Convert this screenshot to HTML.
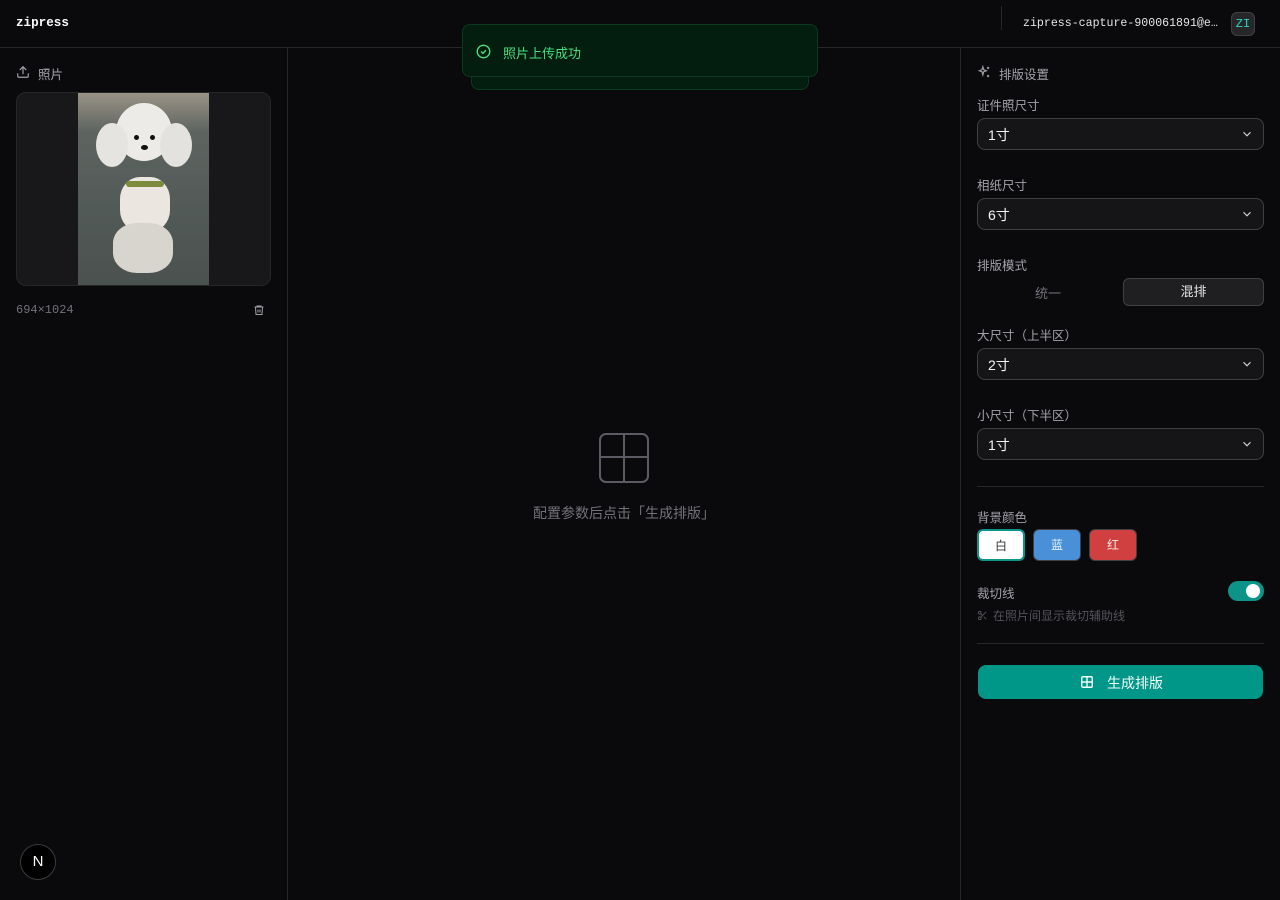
<!DOCTYPE html>
<html><head><meta charset="utf-8">
<style>
*{box-sizing:border-box;margin:0;padding:0}
body{width:1280px;height:900px;background:#0a0a0c;color:#e5e5e5;font-family:"Liberation Sans","Noto Sans CJK SC",sans-serif;position:relative;overflow:hidden;font-size:13px}
.mono{font-family:"Liberation Mono","Noto Sans CJK SC",monospace}
.hdr{position:absolute;left:0;top:0;width:1280px;height:48px;border-bottom:1px solid #27272a}
.left{position:absolute;left:0;top:48px;width:288px;height:852px;border-right:1px solid #27272a}
.right{position:absolute;left:960px;top:48px;width:320px;height:852px;border-left:1px solid #27272a}
.lbl{position:absolute;left:16px;font-size:12.5px;color:#a1a1aa}
.sel{position:absolute;left:16px;width:287px;height:32px;border:1px solid #3f3f46;border-radius:8px;background:#151517;color:#f4f4f5;font-size:14px;padding:6px 10px}
.sel svg{position:absolute;right:9px;top:8px}
.sw{position:absolute;top:481px;width:48px;height:32px;border-radius:6px;font-size:12px;text-align:center;line-height:30px}
</style></head><body>
<div class="hdr">
  <div class="mono" style="position:absolute;left:16px;top:16px;font-size:12.6px;font-weight:bold;color:#fafafa">zipress</div>
  <div style="position:absolute;left:1001px;top:6px;width:1px;height:24px;background:#27272a"></div>
  <div class="mono" style="position:absolute;left:1023px;top:17px;font-size:11.6px;color:#e4e4e7">zipress-capture-900061891@e…</div>
  <div class="mono" style="position:absolute;left:1231px;top:12px;width:24px;height:24px;border-radius:6px;background:#27272a;border:1px solid #3f3f46;color:#2dd4bf;font-size:12px;text-align:center;line-height:22px">ZI</div>
</div>
<div class="left">
  <svg style="position:absolute;left:16px;top:17px" width="14" height="14" viewBox="0 0 24 24" fill="none" stroke="#a1a1aa" stroke-width="2" stroke-linecap="round"><path d="M21 15v4a2 2 0 0 1-2 2H5a2 2 0 0 1-2-2v-4M17 8l-5-5-5 5M12 3v12"/></svg>
  <div style="position:absolute;left:38px;top:16px;color:#a1a1aa;font-size:12.5px">照片</div>
  <div style="position:absolute;left:16px;top:44px;width:255px;height:194px;border-radius:10px;background:#18181b;border:1px solid #27272a;overflow:hidden">
    <div style="position:absolute;left:61px;top:0;width:131px;height:194px;background:linear-gradient(180deg,#9a9386 0%,#5d6460 20%,#525a58 60%,#4a514f 100%);overflow:hidden">
      <div style="position:absolute;left:38px;top:10px;width:56px;height:58px;border-radius:50%;background:#ecebe8"></div>
      <div style="position:absolute;left:18px;top:30px;width:32px;height:44px;border-radius:50%;background:#e6e4e0"></div>
      <div style="position:absolute;left:82px;top:30px;width:32px;height:44px;border-radius:50%;background:#e4e2de"></div>
      <div style="position:absolute;left:42px;top:84px;width:50px;height:55px;border-radius:40%;background:#ebe7e0"></div>
      <div style="position:absolute;left:48px;top:88px;width:38px;height:6px;border-radius:3px;background:#7d8b3e"></div>
      <div style="position:absolute;left:35px;top:130px;width:60px;height:50px;border-radius:40%;background:#d8d4ce"></div>
      <div style="position:absolute;left:56px;top:42px;width:5px;height:5px;border-radius:50%;background:#111"></div>
      <div style="position:absolute;left:72px;top:42px;width:5px;height:5px;border-radius:50%;background:#111"></div>
      <div style="position:absolute;left:63px;top:52px;width:7px;height:5px;border-radius:50%;background:#111"></div>
    </div>
  </div>
  <div class="mono" style="position:absolute;left:16px;top:255px;font-size:12px;color:#71717a">694×1024</div>
  <svg style="position:absolute;left:253px;top:256px" width="12" height="12" viewBox="0 0 24 24" fill="none" stroke="#a1a1aa" stroke-width="2"><path d="M3 6h18M8 6V4h8v2M5 6l1 15h12l1-15M10 11v6M14 11v6"/></svg>
</div>
<svg style="position:absolute;left:598px;top:433px" width="52" height="50" viewBox="0 0 52 50" fill="none" stroke="#5b5b63" stroke-width="2"><rect x="2" y="1" width="48" height="48" rx="6"/><path d="M26 1v48M2 24h48"/></svg>
<div style="position:absolute;left:533px;top:503px;color:#71717a;font-size:14px">配置参数后点击「生成排版」</div>
<div style="position:absolute;left:471px;top:40px;width:338px;height:50px;border-radius:8px;background:#031d0f;border:1px solid #0b3a1f"></div>
<div style="position:absolute;left:462px;top:24px;width:356px;height:53px;border-radius:8px;background:#031d0f;border:1px solid #0b3a1f">
  <svg style="position:absolute;left:13px;top:19px" width="15" height="15" viewBox="0 0 24 24" fill="none" stroke="#4ade80" stroke-width="2.2"><circle cx="12" cy="12" r="10"/><path d="M8 12l3 3 5-5"/></svg>
  <div style="position:absolute;left:40px;top:18px;color:#4ade80;font-size:13px">照片上传成功</div>
</div>
<div class="right">
  <svg style="position:absolute;left:16px;top:17px" width="14" height="14" viewBox="0 0 24 24" fill="none" stroke="#a1a1aa" stroke-width="2"><path d="M10 3l1.5 5L16 10l-4.5 1.5L10 17l-1.5-5.5L4 10l4.5-2z"/><path d="M19 3v4M17 5h4M19 17v4M17 19h4"/></svg>
  <div style="position:absolute;left:38px;top:16px;color:#a1a1aa;font-size:12.5px">排版设置</div>
  <div class="lbl" style="top:47px">证件照尺寸</div>
  <div class="sel" style="top:70px">1寸<svg width="14" height="14" viewBox="0 0 24 24" fill="none" stroke="#d4d4d8" stroke-width="2"><path d="M6 9l6 6 6-6"/></svg></div>
  <div class="lbl" style="top:127px">相纸尺寸</div>
  <div class="sel" style="top:150px">6寸<svg width="14" height="14" viewBox="0 0 24 24" fill="none" stroke="#d4d4d8" stroke-width="2"><path d="M6 9l6 6 6-6"/></svg></div>
  <div class="lbl" style="top:207px">排版模式</div>
  <div style="position:absolute;left:74px;top:235px;color:#71717a;font-size:13px">统一</div>
  <div style="position:absolute;left:162px;top:230px;width:141px;height:28px;border:1px solid #3f3f46;border-radius:6px;background:#1f1f22;color:#e4e4e7;text-align:center;line-height:26px">混排</div>
  <div class="lbl" style="top:277px">大尺寸（上半区）</div>
  <div class="sel" style="top:300px">2寸<svg width="14" height="14" viewBox="0 0 24 24" fill="none" stroke="#d4d4d8" stroke-width="2"><path d="M6 9l6 6 6-6"/></svg></div>
  <div class="lbl" style="top:357px">小尺寸（下半区）</div>
  <div class="sel" style="top:380px">1寸<svg width="14" height="14" viewBox="0 0 24 24" fill="none" stroke="#d4d4d8" stroke-width="2"><path d="M6 9l6 6 6-6"/></svg></div>
  <div style="position:absolute;left:16px;top:438px;width:287px;height:1px;background:#27272a"></div>
  <div class="lbl" style="top:459px">背景颜色</div>
  <div class="sw" style="left:16px;background:#fff;border:2px solid #0d9488;color:#333">白</div>
  <div class="sw" style="left:72px;background:#4a90d9;border:1px solid #3f3f46;color:#e6f0fb">蓝</div>
  <div class="sw" style="left:128px;background:#d04040;border:1px solid #3f3f46;color:#fbe4e4">红</div>
  <div class="lbl" style="top:535px">裁切线</div>
  <div style="position:absolute;left:267px;top:533px;width:36px;height:20px;border-radius:10px;background:#0d9488"><div style="position:absolute;right:4px;top:3px;width:14px;height:14px;border-radius:50%;background:#fff"></div></div>
  <svg style="position:absolute;left:16px;top:562px" width="11" height="11" viewBox="0 0 24 24" fill="none" stroke="#52525b" stroke-width="2"><circle cx="6" cy="6" r="3"/><circle cx="6" cy="18" r="3"/><path d="M20 4L8.1 15.9M14.5 14.5L20 20M8.1 8.1L12 12"/></svg>
  <div style="position:absolute;left:32px;top:559px;color:#52525b;font-size:12px">在照片间显示裁切辅助线</div>
  <div style="position:absolute;left:16px;top:595px;width:287px;height:1px;background:#27272a"></div>
  <div style="position:absolute;left:17px;top:617px;width:285px;height:34px;border-radius:8px;background:#009688;color:#f0fdfa;font-size:14px">
    <svg style="position:absolute;left:102px;top:10px" width="14" height="14" viewBox="0 0 24 24" fill="none" stroke="#f0fdfa" stroke-width="2.4"><rect x="3" y="3" width="18" height="18" rx="2"/><path d="M12 3v18M3 12h18"/></svg>
    <div style="position:absolute;left:129px;top:8px">生成排版</div>
  </div>
</div>
<div style="position:absolute;left:20px;top:844px;width:36px;height:36px;border-radius:50%;background:#000;border:1px solid #3a3a3a;color:#fff;text-align:center;line-height:34px;font-size:15px">N</div>
</body></html>
